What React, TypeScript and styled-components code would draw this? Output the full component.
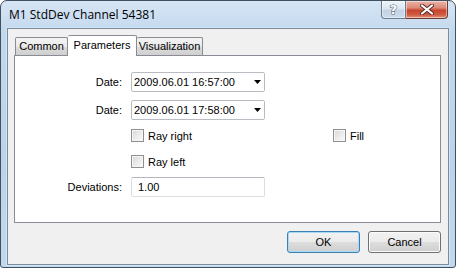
import React from 'react'
import styled, { createGlobalStyle } from 'styled-components'

const GlobalStyle = createGlobalStyle`
  html, body {
    margin: 0;
    padding: 0;
    background: #ffffff;
  }
  body {
    font-family: "Liberation Sans", Arial, sans-serif;
    font-size: 11px;
    color: #000000;
  }
`

const Window = styled.div`
  box-sizing: border-box;
  width: 456px;
  height: 268px;
  border: 1px solid #41505f;
  border-radius: 7px 7px 3px 3px;
  background: linear-gradient(180deg, #d6e5f5 0%, #c3d8ee 12%, #bcd3eb 60%, #c2d8ee 100%);
  display: flex;
  flex-direction: column;
  padding: 0 6px 2px 6px;
  overflow: hidden;
`

const TitleBar = styled.div`
  height: 27px;
  flex: none;
  display: flex;
  align-items: flex-start;
  justify-content: space-between;
`

const Title = styled.div`
  font-family: "Open Sans", "Liberation Sans", sans-serif;
  font-size: 12px;
  line-height: 27px;
  padding-left: 2px;
  color: #000000;
`

const CaptionButtons = styled.div`
  display: flex;
  margin-right: 1px;
`

const CaptionButton = styled.div<{ $close?: boolean }>`
  box-sizing: border-box;
  height: 18px;
  width: ${(p) => (p.$close ? 42 : 25)}px;
  display: flex;
  align-items: center;
  justify-content: center;
  border: 1px solid ${(p) => (p.$close ? '#6a3b35' : '#6b7c8d')};
  border-top: none;
  border-left: ${(p) => (p.$close ? 'none' : '1px solid #6b7c8d')};
  border-radius: ${(p) => (p.$close ? '0 0 4px 0' : '0 0 0 4px')};
  background: ${(p) =>
    p.$close
      ? 'linear-gradient(180deg, #eab4a8 0%, #dc8a78 40%, #c9442e 55%, #cf5a40 80%, #e5917a 100%)'
      : 'linear-gradient(180deg, #eef3f9 0%, #dbe6f2 45%, #c3d3e5 55%, #cddcec 100%)'};
  box-shadow: inset 0 0 0 1px rgba(255, 255, 255, 0.45);
`

const HelpGlyph = styled.span`
  font-family: "DejaVu Sans", sans-serif;
  font-size: 13px;
  font-weight: bold;
  color: #ffffff;
  -webkit-text-stroke: 1px #4e5b68;
  paint-order: stroke fill;
  line-height: 16px;
`

const Client = styled.div`
  flex: 1;
  display: flex;
  flex-direction: column;
  background: #f0f0f0;
  border: 1px solid #7f8a96;
  box-shadow: 0 0 0 1px #cbe8fb;
  padding: 6px 7px 0 6px;
`

const TabStrip = styled.div`
  height: 21px;
  display: flex;
  align-items: flex-end;
  padding-left: 1px;
  margin-bottom: -1px;
`

const Tab = styled.div<{ $active?: boolean; $w: number }>`
  box-sizing: border-box;
  width: ${(p) => p.$w}px;
  height: ${(p) => (p.$active ? 21 : 18)}px;
  margin-bottom: ${(p) => (p.$active ? 0 : 1)}px;
  border: 1px solid #898c95;
  border-bottom: none;
  border-radius: 2px 2px 0 0;
  background: ${(p) =>
    p.$active ? '#ffffff' : 'linear-gradient(180deg, #f3f3f3 0%, #ebebeb 50%, #dddddd 51%, #cfcfcf 100%)'};
  position: relative;
  z-index: ${(p) => (p.$active ? 2 : 1)};
  display: flex;
  justify-content: center;
  padding-top: ${(p) => (p.$active ? 3 : 2)}px;
  line-height: 13px;
  & + & {
    border-left: none;
  }
`

const Panel = styled.div`
  box-sizing: border-box;
  width: 427px;
  height: 168px;
  background: #ffffff;
  border: 1px solid #898c95;
  position: relative;
  z-index: 1;
`

const Form = styled.div`
  display: grid;
  grid-template-columns: 107px 270px;
  grid-template-rows: 28px 29px 26px 22px 20px;
  column-gap: 9px;
  padding-top: 16px;
`

const Label = styled.div`
  text-align: right;
  line-height: 20px;
`

const Combo = styled.div`
  box-sizing: border-box;
  width: 134px;
  height: 20px;
  border: 1px solid #b9bdc3;
  border-radius: 2px;
  background: #ffffff;
  display: flex;
  align-items: center;
  justify-content: space-between;
  padding: 0 3px 0 2px;
`

const Edit = styled.div`
  box-sizing: border-box;
  width: 134px;
  height: 20px;
  border: 1px solid #dadde2;
  border-top-color: #b3b6bc;
  border-radius: 2px;
  background: #ffffff;
  line-height: 18px;
  padding-left: 6px;
`

const CheckRow = styled.div`
  grid-column: 2;
  display: flex;
  align-items: flex-start;
`

const CheckItem = styled.label<{ $w?: number }>`
  display: flex;
  align-items: center;
  gap: 4px;
  height: 13px;
  width: ${(p) => (p.$w ? `${p.$w}px` : 'auto')};
`

const Box = styled.span`
  box-sizing: border-box;
  width: 13px;
  height: 13px;
  border: 1px solid #8e8f8f;
  background: linear-gradient(135deg, #d6d6d6 0%, #eeeeee 60%, #fafafa 100%);
  box-shadow: inset 0 0 0 1px #f6f6f6;
  flex: none;
`

const Buttons = styled.div`
  display: flex;
  justify-content: flex-end;
  gap: 8px;
  margin-top: 8px;
`

const Button = styled.div<{ $default?: boolean }>`
  box-sizing: border-box;
  width: 73px;
  height: 22px;
  border: 1px solid ${(p) => (p.$default ? '#3c7fb1' : '#707070')};
  border-radius: 3px;
  background: linear-gradient(180deg, #f2f2f2 0%, #ebebeb 50%, #dddddd 51%, #cfcfcf 100%);
  box-shadow: inset 0 0 0 1px ${(p) => (p.$default ? '#a7d9f5' : '#fbfbfb')};
  display: flex;
  align-items: center;
  justify-content: center;
`

const Arrow = () => (
  <svg width="7" height="4" viewBox="0 0 7 4">
    <polygon points="0,0 7,0 3.5,4" fill="#000000" />
  </svg>
)

const CloseIcon = () => (
  <svg width="14" height="11" viewBox="0 0 14 11">
    <path d="M2 1.5 L12 9.5 M12 1.5 L2 9.5" stroke="#5a2b24" strokeWidth="4" strokeLinecap="round" />
    <path d="M2 1.5 L12 9.5 M12 1.5 L2 9.5" stroke="#ffffff" strokeWidth="2.2" strokeLinecap="round" />
  </svg>
)

const DateField = ({ value }: { value: string }) => (
  <Combo>
    <span>{value}</span>
    <Arrow />
  </Combo>
)

const App: React.FC = () => {
  return (
    <>
      <GlobalStyle />
      <Window>
        <TitleBar>
          <Title>M1 StdDev Channel 54381</Title>
          <CaptionButtons>
            <CaptionButton>
              <HelpGlyph>?</HelpGlyph>
            </CaptionButton>
            <CaptionButton $close>
              <CloseIcon />
            </CaptionButton>
          </CaptionButtons>
        </TitleBar>
        <Client>
          <TabStrip>
            <Tab $w={53}>Common</Tab>
            <Tab $w={69} $active>Parameters</Tab>
            <Tab $w={66}>Visualization</Tab>
          </TabStrip>
          <Panel>
            <Form>
              <Label>Date:</Label>
              <DateField value="2009.06.01 16:57:00" />
              <Label>Date:</Label>
              <DateField value="2009.06.01 17:58:00" />
              <CheckRow>
                <CheckItem $w={202}>
                  <Box />
                  Ray right
                </CheckItem>
                <CheckItem>
                  <Box />
                  Fill
                </CheckItem>
              </CheckRow>
              <CheckRow>
                <CheckItem>
                  <Box />
                  Ray left
                </CheckItem>
              </CheckRow>
              <Label>Deviations:</Label>
              <Edit>1.00</Edit>
            </Form>
          </Panel>
          <Buttons>
            <Button $default>OK</Button>
            <Button>Cancel</Button>
          </Buttons>
        </Client>
      </Window>
    </>
  )
}

export default App
